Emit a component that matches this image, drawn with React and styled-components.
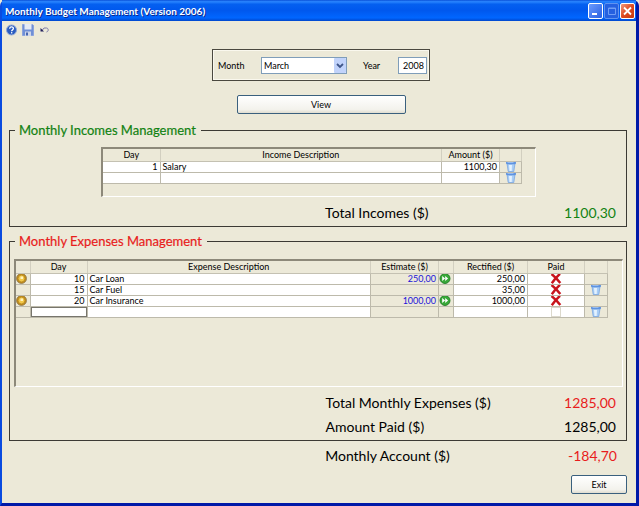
import React, { useState } from 'react';
import styled, { createGlobalStyle } from 'styled-components';

const GlobalStyle = createGlobalStyle`
	* {
		box-sizing: border-box;
	}
	body {
		margin: 0;
		background: #ece9d8;
		font-family: Lato, "Open Sans", sans-serif;
		font-size: 9px;
		color: #000;
	}
	button, input, select {
		font: inherit;
		color: inherit;
		margin: 0;
	}
`;

const Window = styled.div`
	min-height: 100vh;
	display: flex;
	flex-direction: column;
	background: #ece9d8;
	border: solid #0a4be0;
	border-width: 0 3px 3px 2px;
	border-right-color: #0019a8;
	border-bottom-color: #0019a8;
	border-radius: 6px 6px 0 0;
`;

const TitleBar = styled.header`
	height: 21px;
	display: flex;
	align-items: center;
	justify-content: space-between;
	padding: 1px 0 0 3px;
	background: linear-gradient(#0a50d8 0%, #2a86ff 8%, #0560f0 20%, #0058ee 50%, #0066ff 85%, #0046cc 100%);
`;

const Title = styled.h1`
	margin: 0;
	font-size: 10px;
	font-weight: 700;
	color: #fff;
	text-shadow: 1px 1px #0a2a90;
`;

const Controls = styled.div`
	display: flex;
	gap: 1px;
	padding-right: 1px;
`;

const ControlButton = styled.button`
	width: 15px;
	height: 16px;
	padding: 0;
	border: 1px solid ${props => props.$dim ? '#5f93f0' : '#fff'};
	border-radius: 2px;
	background: ${props => props.$close ? 'linear-gradient(135deg, #f09a80, #dd4a20 50%, #c63a10)' : props.$dim ? '#2560e0' : 'linear-gradient(135deg, #6b9bff, #2a5fe0)'};
	svg {
		display: block;
	}
`;

const Toolbar = styled.nav`
	display: flex;
	align-items: center;
	gap: 5px;
	height: 18px;
	padding-left: 4px;
`;

const ToolButton = styled.button`
	padding: 0;
	border: 0;
	background: none;
	svg {
		display: block;
	}
`;

const Content = styled.main`
	flex: 1;
	display: flex;
	flex-direction: column;
	padding: 10px 9px 8px 7px;
`;

const Filter = styled.form`
	align-self: center;
	display: flex;
	flex-direction: column;
	gap: 14px;
	align-items: center;
	padding-left: 6px;
`;

const FilterBox = styled.div`
	display: flex;
	align-items: center;
	height: 32px;
	padding: 0 2px 0 5px;
	border: 1px solid #4a483f;
	box-shadow: inset 0 0 0 1px #faf8ee;
`;

const FieldLabel = styled.label`
	width: ${props => props.$width};
`;

const MonthSelect = styled.div`
	position: relative;
	width: 86px;
	margin-right: 16px;
	select {
		display: block;
		width: 100%;
		height: 17px;
		padding: 0 2px;
		border: 1px solid #7f9db9;
		border-radius: 0;
		background: #fff;
		appearance: none;
	}
	svg {
		position: absolute;
		top: 1px;
		right: 1px;
		pointer-events: none;
	}
`;

const YearInput = styled.input`
	width: 29px;
	height: 17px;
	padding: 0 2px;
	border: 1px solid #7f9db9;
	background: #fff;
	text-align: right;
`;

const Button = styled.button`
	width: ${props => props.$width};
	height: 19px;
	padding: 0;
	border: 1px solid #3a607e;
	border-radius: 2px;
	background: linear-gradient(#fff, #f3f2ec 80%, #e0ddd0);
`;

const Group = styled.fieldset`
	min-width: 0;
	margin: ${props => props.$top} 0 0;
	padding: ${props => props.$pad};
	border: 1px solid #3c3a34;
`;

const Legend = styled.legend`
	margin-left: 1px;
	padding: 0 5px 0 4px;
	font-size: 13px;
	line-height: 18px;
	color: ${props => props.$color};
	-webkit-text-stroke: 0.2px;
`;

const GridPanel = styled.div`
	height: ${props => props.$height};
	margin: ${props => props.$margin};
	padding-right: ${props => props.$gutter};
	border: solid;
	border-width: 2px 1px 1px 2px;
	border-color: #8d897a #fff #fff #8d897a;
`;

const Table = styled.table`
	width: 100%;
	table-layout: fixed;
	border-collapse: collapse;
	line-height: 10px;
`;

const Head = styled.th`
	width: ${props => props.$width || 'auto'};
	height: 12px;
	padding: 1px 0 0;
	border-bottom: 1px solid #c4c1b2;
	border-right: 1px solid #d2cfc0;
	font-weight: 400;
`;

const Cell = styled.td`
	height: 11px;
	padding: ${props => props.$flush ? '0' : '0 2px'};
	border: 1px solid #bdbaab;
	border-left-width: 0;
	background: ${props => props.$locked ? '#ece9d8' : '#fff'};
	color: ${props => props.$locked ? '#1a12d8' : '#000'};
	text-align: ${props => props.$align || 'left'};
	overflow: hidden;
	white-space: nowrap;
`;

const CellInput = styled.input`
	display: block;
	width: 100%;
	height: 10px;
	padding: 0 2px;
	border: 1px solid #77756c;
	background: #fff;
	text-align: right;
	outline: none;
`;

const IconButton = styled.button`
	display: flex;
	align-items: center;
	justify-content: ${props => props.$start ? 'flex-start' : 'center'};
	width: 100%;
	height: 10px;
	padding: 0;
	border: 0;
	background: #ece9d8;
	svg {
		flex: none;
	}
`;

const PaidLabel = styled.label`
	display: flex;
	align-items: center;
	justify-content: center;
	height: 10px;
	input {
		appearance: none;
		width: ${props => props.$marked ? '0' : '10px'};
		height: ${props => props.$marked ? '0' : '10px'};
		border: ${props => props.$marked ? '0' : '1px solid #dcd9cc'};
	}
	svg {
		flex: none;
	}
`;

const TotalRow = styled.div`
	display: flex;
	justify-content: space-between;
	height: 24px;
	align-items: center;
	margin-top: ${props => props.$top || '0'};
	margin-left: 51%;
	padding-left: 1px;
	padding-right: ${props => props.$right || '10px'};
	font-size: 14px;
	line-height: 24px;
`;

const Amount = styled.output`
	color: ${props => props.$color};
`;

const Footer = styled.footer`
	display: flex;
	justify-content: flex-end;
	margin-top: 7px;
`;

const HelpIcon = () => (
	<svg width="11" height="12" viewBox="0 0 11 12">
		<circle cx="5.5" cy="6" r="5" fill="#2a5cc0" stroke="#8fa8d8" />
		<path d="M3.7 4.7C3.7 2.4 7.4 2.4 7.4 4.6C7.4 6 5.6 5.8 5.6 7.3" fill="none" stroke="#fff" strokeWidth="1.3" />
		<rect x="5" y="8.1" width="1.3" height="1.3" fill="#fff" />
	</svg>
);

const SaveIcon = () => (
	<svg width="12" height="12" viewBox="0 0 12 12">
		<path d="M.5.5h10l1 1v10H.5z" fill="#6f8fd6" stroke="#8ba3dc" />
		<rect x="2.5" y="0" width="7" height="5.5" fill="#e6eaf4" />
		<rect x="3" y="7.5" width="6" height="4.5" fill="#cfd6e8" />
		<rect x="4" y="8.5" width="2" height="3" fill="#4565b0" />
	</svg>
);

const UndoIcon = () => (
	<svg width="12" height="12" viewBox="0 0 12 12">
		<path d="M3 6.5l2-2.5h2.5c2 0 2.5 3.5 0 4" fill="none" stroke="#7a78a8" />
		<path d="M1.5 4v3.5H5z" fill="#22205c" />
	</svg>
);

const TrashIcon = () => (
	<svg width="12" height="11" viewBox="0 0 12 11">
		<path d="M2 2.5h8L8.8 10.5H3.2z" fill="#a9cdf5" stroke="#6e9fe0" strokeWidth=".7" />
		<path d="M4 4h3l-.3 6H4.5z" fill="#e4f2ff" />
		<rect x="1" y=".6" width="10" height="2.6" rx="1.2" fill="#5f93e0" />
		<rect x="2.5" y="1" width="6" height=".8" fill="#a6c8f4" />
	</svg>
);

const CoinIcon = () => (
	<svg width="12" height="11" viewBox="0 0 12 11">
		<circle cx="5.5" cy="5.5" r="5" fill="#c08a1c" stroke="#8f7a4c" strokeWidth=".8" />
		<circle cx="5.5" cy="5.5" r="3.4" fill="#f2c84a" stroke="#a87812" strokeWidth=".6" />
		<path d="M4.5 3.5H7V6H4.5z" fill="#fff3c0" />
	</svg>
);

const ForwardIcon = () => (
	<svg width="12" height="11" viewBox="0 0 12 11">
		<circle cx="6" cy="5.5" r="5" fill="#38a838" stroke="#1f7a24" strokeWidth=".9" />
		<path d="M3.2 3l2.9 2.5L3.2 8zM6.2 3l2.9 2.5L6.2 8z" fill="#fff" />
	</svg>
);

const CrossIcon = () => (
	<svg width="12" height="11" viewBox="0 0 12 11">
		<path d="M1.5 1C4 3 8 7 10.3 10M10 .8C7.5 3 4 7 1.8 10.2" fill="none" stroke="#c8141c" strokeWidth="2.4" />
	</svg>
);

const ArrowIcon = () => (
	<svg width="12" height="15" viewBox="0 0 12 15">
		<rect width="12" height="15" rx="1" fill="#c1d3fb" />
		<path d="M3 6l3 3 3-3" fill="none" stroke="#3f5689" strokeWidth="1.8" />
	</svg>
);

const incomes = [
	{ day: '1', text: 'Salary', amount: '1100,30' },
	{ day: '', text: '', amount: '' }
];

const expenses = [
	{ day: '10', text: 'Car Loan', estimate: '250,00', rectified: '250,00', planned: true },
	{ day: '15', text: 'Car Fuel', estimate: '', rectified: '35,00', planned: false },
	{ day: '20', text: 'Car Insurance', estimate: '1000,00', rectified: '1000,00', planned: true }
];

const Total = ({ label, value, color, right, top }) => (
	<TotalRow $right={right} $top={top}>
		<span>{label}</span>
		<Amount $color={color}>{value}</Amount>
	</TotalRow>
);

const IncomeTable = () => (
	<Table>
		<thead>
			<tr>
				<Head $width="57px">Day</Head>
				<Head>Income Description</Head>
				<Head $width="58px">Amount ($)</Head>
				<Head $width="22px" />
			</tr>
		</thead>
		<tbody>
			{incomes.map((row, i) => (
				<tr key={i}>
					<Cell $align="right">{row.day}</Cell>
					<Cell>{row.text}</Cell>
					<Cell $align="right">{row.amount}</Cell>
					<Cell $flush $locked>
						<IconButton aria-label="Delete income"><TrashIcon /></IconButton>
					</Cell>
				</tr>
			))}
		</tbody>
	</Table>
);

const ExpenseTable = () => (
	<Table>
		<thead>
			<tr>
				<Head $width="14px" />
				<Head $width="57px">Day</Head>
				<Head>Expense Description</Head>
				<Head $width="68px">Estimate ($)</Head>
				<Head $width="15px" />
				<Head $width="74px">Rectified ($)</Head>
				<Head $width="57px">Paid</Head>
				<Head $width="23px" />
			</tr>
		</thead>
		<tbody>
			{expenses.map(row => (
				<tr key={row.day}>
					<Cell $flush $locked>
						{row.planned && <IconButton $start aria-label="Planned expense"><CoinIcon /></IconButton>}
					</Cell>
					<Cell $align="right">{row.day}</Cell>
					<Cell>{row.text}</Cell>
					<Cell $align="right" $locked>{row.estimate}</Cell>
					<Cell $flush $locked>
						{row.planned && <IconButton $start aria-label="Copy estimate"><ForwardIcon /></IconButton>}
					</Cell>
					<Cell $align="right">{row.rectified}</Cell>
					<Cell $flush>
						<PaidLabel $marked>
							<input type="checkbox" aria-label={'Paid ' + row.text} defaultChecked />
							<CrossIcon />
						</PaidLabel>
					</Cell>
					<Cell $flush $locked>
						{!row.planned && <IconButton aria-label="Delete expense"><TrashIcon /></IconButton>}
					</Cell>
				</tr>
			))}
			<tr>
				<Cell $flush $locked />
				<Cell $flush><CellInput aria-label="Day" /></Cell>
				<Cell />
				<Cell $locked />
				<Cell $flush $locked />
				<Cell />
				<Cell $flush>
					<PaidLabel><input type="checkbox" aria-label="Paid" /></PaidLabel>
				</Cell>
				<Cell $flush $locked>
					<IconButton aria-label="Delete expense"><TrashIcon /></IconButton>
				</Cell>
			</tr>
		</tbody>
	</Table>
);

const App = () => {
	const [month, setMonth] = useState('March');
	const [year, setYear] = useState('2008');

	return (
		<Window>
			<GlobalStyle />
			<TitleBar>
				<Title>Monthly Budget Management (Version 2006)</Title>
				<Controls>
					<ControlButton aria-label="Minimize">
						<svg width="13" height="14"><rect x="3" y="9" width="5" height="2" fill="#fff" /></svg>
					</ControlButton>
					<ControlButton $dim aria-label="Maximize" disabled>
						<svg width="13" height="14"><path d="M3.5 4v6.5h7V4zM3 4.5h8" fill="none" stroke="#6f9df5" /></svg>
					</ControlButton>
					<ControlButton $close aria-label="Close">
						<svg width="13" height="14"><path d="M3 3.5l7 7M10 3.5l-7 7" stroke="#fff" strokeWidth="1.8" /></svg>
					</ControlButton>
				</Controls>
			</TitleBar>
			<Toolbar>
				<ToolButton aria-label="Help"><HelpIcon /></ToolButton>
				<ToolButton aria-label="Save"><SaveIcon /></ToolButton>
				<ToolButton aria-label="Undo"><UndoIcon /></ToolButton>
			</Toolbar>
			<Content>
				<Filter onSubmit={e => e.preventDefault()}>
					<FilterBox>
						<FieldLabel htmlFor="month" $width="43px">Month</FieldLabel>
						<MonthSelect>
							<select id="month" value={month} onChange={e => setMonth(e.target.value)}>
								<option>January</option>
								<option>February</option>
								<option>March</option>
								<option>April</option>
							</select>
							<ArrowIcon />
						</MonthSelect>
						<FieldLabel htmlFor="year" $width="35px">Year</FieldLabel>
						<YearInput id="year" value={year} onChange={e => setYear(e.target.value)} />
					</FilterBox>
					<Button $width="169px">View</Button>
				</Filter>
				<Group $top="7px" $pad="8px 4px 1px">
					<Legend $color="#128212">Monthly Incomes Management</Legend>
					<GridPanel $height="50px" $margin="0 86px 4px 87px" $gutter="13px">
						<IncomeTable />
					</GridPanel>
					<Total label="Total Incomes ($)" value="1100,30" color="#128212" right="6px" />
				</Group>
				<Group $top="5px" $pad="9px 3px 1px 4px">
					<Legend $color="#e81c1c">Monthly Expenses Management</Legend>
					<GridPanel $height="128px" $margin="0 0 4px" $gutter="14px">
						<ExpenseTable />
					</GridPanel>
					<Total label="Total Monthly Expenses ($)" value="1285,00" color="#e81c1c" right="7px" />
					<Total label="Amount Paid ($)" value="1285,00" color="#000" right="7px" />
				</Group>
				<Total label="Monthly Account ($)" value="-184,70" color="#e81c1c" top="3px" />
				<Footer>
					<Button $width="56px">Exit</Button>
				</Footer>
			</Content>
		</Window>
	);
};

export default App;
